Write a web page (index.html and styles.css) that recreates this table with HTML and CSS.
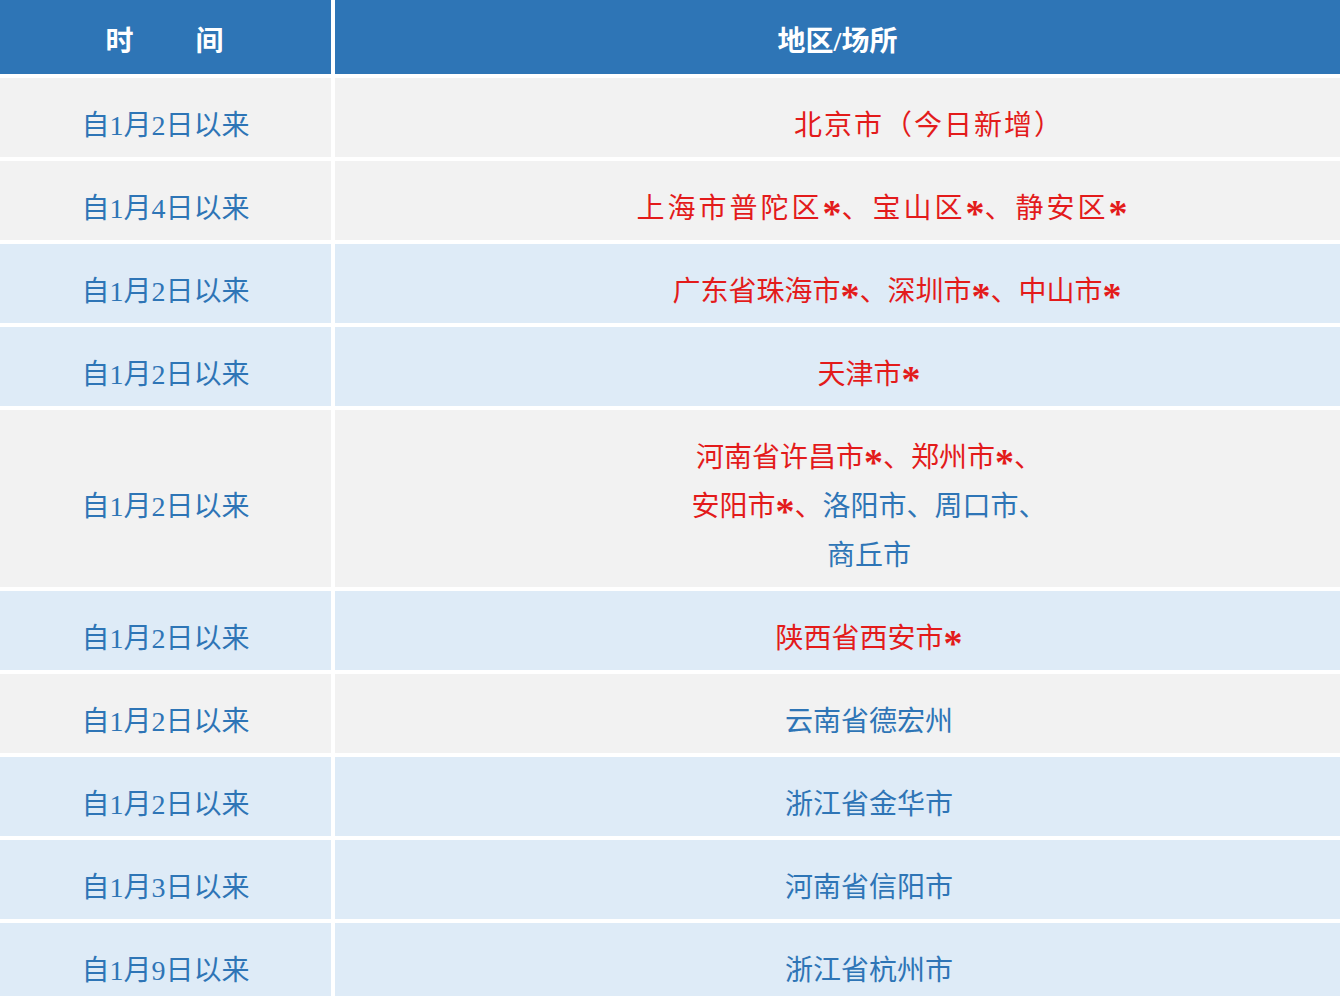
FILE: index.html
```html
<!DOCTYPE html>
<html lang="zh-CN">
<head>
<meta charset="utf-8">
<title>地区/场所</title>
<link rel="stylesheet" href="styles.css">
</head>
<body>
<div class="table">
  <div class="cell head time-head">时　　间</div>
  <div class="cell head">地区/场所</div>

  <div class="cell time grey">自1月2日以来</div>
  <div class="cell place grey red shift-1">北京市（今日新增）</div>

  <div class="cell time grey">自1月4日以来</div>
  <div class="cell place grey red shift-2">上海市普陀区<span class="star">*</span>、宝山区<span class="star">*</span>、静安区<span class="star">*</span></div>

  <div class="cell time blue">自1月2日以来</div>
  <div class="cell place blue red shift-3">广东省珠海市<span class="star">*</span>、深圳市<span class="star">*</span>、中山市<span class="star">*</span></div>

  <div class="cell time blue">自1月2日以来</div>
  <div class="cell place blue red">天津市<span class="star">*</span></div>

  <div class="cell time grey">自1月2日以来</div>
  <div class="cell place grey"><span class="red">河南省许昌市<span class="star">*</span>、郑州市<span class="star">*</span>、</span><br><span class="red">安阳市<span class="star">*</span>、</span>洛阳市、周口市、<br>商丘市</div>

  <div class="cell time blue">自1月2日以来</div>
  <div class="cell place blue red">陕西省西安市<span class="star">*</span></div>

  <div class="cell time grey">自1月2日以来</div>
  <div class="cell place grey">云南省德宏州</div>

  <div class="cell time blue">自1月2日以来</div>
  <div class="cell place blue">浙江省金华市</div>

  <div class="cell time blue">自1月3日以来</div>
  <div class="cell place blue">河南省信阳市</div>

  <div class="cell time blue">自1月9日以来</div>
  <div class="cell place blue">浙江省杭州市</div>
</div>
</body>
</html>
```
FILE: styles.css
```css
html, body {
  margin: 0;
  padding: 0;
  background: #ffffff;
}

.table {
  display: grid;
  grid-template-columns: 331px 1fr;
  column-gap: 4px;
  row-gap: 4px;
  font-family: "Liberation Serif", "Noto Sans CJK SC", serif;
  font-size: 28px;
  color: #2e75b6;
}

.cell {
  text-align: center;
  line-height: 49px;
  padding: 23px 0 7px;
}

.time {
  display: flex;
  align-items: center;
  justify-content: center;
}

.head {
  background: #2e75b6;
  color: #ffffff;
  font-weight: bold;
  height: 74px;
  box-sizing: border-box;
  padding: 17px 0 8px;
}

.time-head {
  letter-spacing: 2px;
}

.place {
  padding-left: 63px;
}

.grey {
  background: #f2f2f2;
}

.blue {
  background: #deebf7;
}

.red {
  color: #e31b1b;
}

.star {
  font-weight: bold;
  font-size: 38px;
  vertical-align: -8px;
  line-height: 0;
  letter-spacing: 0;
}

.shift-1 {
  padding-left: 183px;
  letter-spacing: 2px;
}

.shift-2 {
  padding-left: 89px;
  letter-spacing: 3px;
}

.shift-3 {
  padding-left: 119px;
}
```
